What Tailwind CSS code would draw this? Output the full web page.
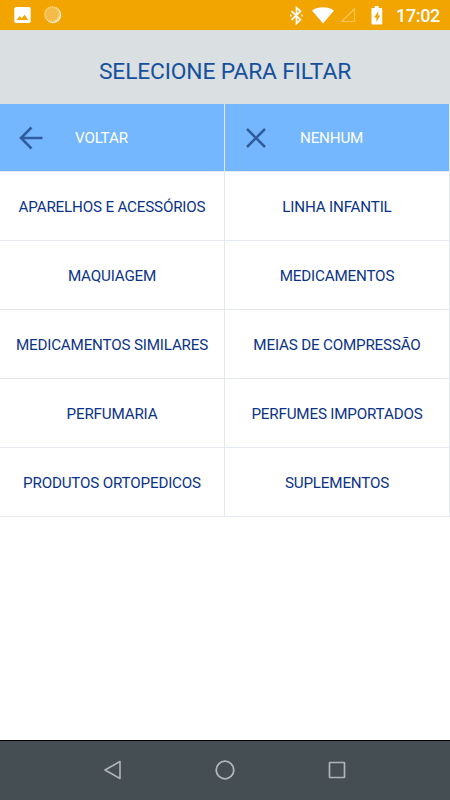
<!DOCTYPE html>
<html lang="pt-BR">
<head>
<meta charset="UTF-8">
<meta name="viewport" content="width=device-width, initial-scale=1">
<title>Selecione para filtar</title>
<script src="https://cdn.jsdelivr.net/npm/@tailwindcss/browser@4"></script>
</head>
<body class="flex h-[800px] w-[450px] flex-col overflow-hidden bg-white font-['Roboto',sans-serif]">
<header class="flex h-[30px] shrink-0 items-center bg-[#f2a400] text-white">
  <svg class="ml-[14px] h-4 w-[17px]" viewBox="0 0 17 16"><path fill="currentColor" fill-rule="evenodd" d="M2 0h13a1.7 1.7 0 0 1 1.7 1.7v12.6A1.7 1.7 0 0 1 15 16H2a1.7 1.7 0 0 1-1.7-1.7V1.7A1.7 1.7 0 0 1 2 0zM2.7 13h11.6L10.6 7.7 7.7 11.300 5.700 9z"/></svg>
  <svg class="ml-[13px] h-[18px] w-[18px]" viewBox="0 0 18 18"><circle cx="9" cy="9" r="8.200" fill="#fff1d2"/><circle cx="8" cy="8.200" r="7.700" fill="#f5bb48"/><circle cx="8" cy="8.200" r="7.100" fill="none" stroke="#f9d58c" stroke-width="1.300" stroke-dasharray="1.200 1"/></svg>
  <div class="ml-auto mr-[10px] flex items-center">
    <svg class="h-[19px] w-[13px]" viewBox="0 0 12 18" fill="none" stroke="currentColor" stroke-width="1.600"><path d="M1.300 4.800 9.800 13 6 16.500v-15L9.800 5 1.300 13.200"/><path d="M.6 8v2M11.300 8v2" stroke-width="1.400"/></svg>
    <svg class="ml-[9px] h-[18px] w-[22px]" viewBox="0 0 22 18"><path fill="currentColor" d="M0 4.500C6 .1 16 .1 22 4.500L11 17.500z"/></svg>
    <svg class="ml-[6px] h-4 w-4" viewBox="0 0 16 16"><path d="M14.500 1.800v12.700H1.800z" fill="none" stroke="#f8c65d" stroke-width="1.200"/></svg>
    <svg class="ml-[15px] h-[19px] w-[12px]" viewBox="0 0 12 19"><path fill="currentColor" fill-rule="evenodd" d="M3.700 0h4v2h2.500c.6 0 1 .4 1 1v14.500c0 .6-.4 1-1 1H1.500c-.6 0-1-.4-1-1V3c0-.6.4-1 1-1h2.200zM7.200 5.500 3 11.500h2.400V16L9.200 9.500H7.200z"/></svg>
    <span class="ml-[13px] pt-px text-[18px] leading-5 font-medium tracking-[-0.350px]">17:02</span>
  </div>
</header>
<h1 class="flex h-[74px] shrink-0 items-center justify-center bg-[#dadfe1] pt-[10px] text-[22.800px] leading-7 tracking-[-0.150px] text-[#15509d]">SELECIONE PARA FILTAR</h1>
<main class="grid shrink-0 grid-cols-2 grid-rows-[68px_repeat(5,69px)] text-[15.200px] tracking-[-0.180px] text-[#0b3388] *:flex *:items-center *:justify-center *:border-r *:border-b *:border-[#e3e8f1] *:pt-[2px]">
  <button class="relative bg-[#74b7ff] text-white">
    <svg class="absolute left-[19px] top-[22px] h-6 w-6" viewBox="0 0 24 24" fill="none" stroke="#315d9f" stroke-width="2.600"><path d="M12.500 1.500 2 12l10.500 10.500M2 12h21.500"/></svg>
    <span class="absolute left-[75px]">VOLTAR</span>
  </button>
  <button class="relative bg-[#74b7ff] text-white">
    <svg class="absolute left-[21px] top-6 h-5 w-5" viewBox="0 0 20 20" fill="none" stroke="#315d9f" stroke-width="2.600"><path d="m1 1 18 18M19 1 1 19"/></svg>
    <span class="absolute left-[75px]">NENHUM</span>
  </button>
  <button>APARELHOS E ACESSÓRIOS</button><button>LINHA INFANTIL</button>
  <button>MAQUIAGEM</button><button>MEDICAMENTOS</button>
  <button>MEDICAMENTOS SIMILARES</button><button>MEIAS DE COMPRESSÃO</button>
  <button>PERFUMARIA</button><button>PERFUMES IMPORTADOS</button>
  <button>PRODUTOS ORTOPEDICOS</button><button>SUPLEMENTOS</button>
</main>
<footer class="mt-auto flex h-[60px] shrink-0 items-center justify-center gap-[92px] border-t border-black bg-[#454e53] pb-px text-[#b1b5b7]">
  <svg class="h-5 w-5" viewBox="0 0 20 20" fill="none" stroke="currentColor" stroke-width="1.600"><path d="M17 1.500v17L2 10z" stroke-linejoin="round"/></svg>
  <svg class="h-5 w-5" viewBox="0 0 20 20" fill="none" stroke="currentColor" stroke-width="1.800"><circle cx="10" cy="10" r="8.800"/></svg>
  <svg class="h-5 w-5" viewBox="0 0 20 20" fill="none" stroke="currentColor" stroke-width="1.700"><rect x="2.500" y="2.500" width="15" height="15" rx=".5"/></svg>
</footer>
</body>
</html>
